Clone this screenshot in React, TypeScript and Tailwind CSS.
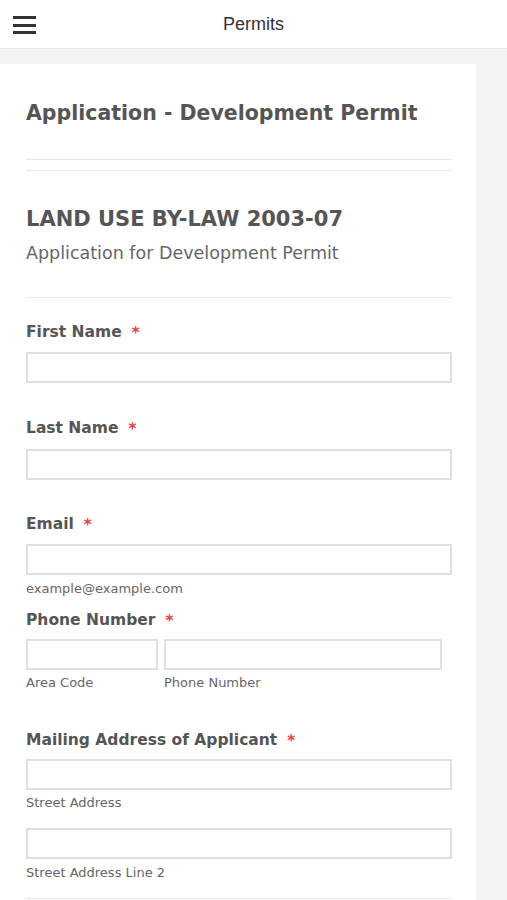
import React from 'react';

const font = { fontFamily: '"DejaVu Sans", "Liberation Sans", sans-serif' };

function Label({ text }: { text: string }) {
  return (
    <div className="flex items-center h-[22px] text-[15.5px] font-bold text-[#555]">
      <span>{text}</span>
      <span className="ml-[10px] text-[#f23a3c] text-[15px]">*</span>
    </div>
  );
}

function Input({ className = '' }: { className?: string }) {
  return <div className={`h-[31px] border-2 border-[#e0e0e0] bg-white ${className}`} />;
}

function Sub({ text }: { text: string }) {
  return <div className="h-[16px] leading-[16px] text-[13px] text-[#666]">{text}</div>;
}

export default function App() {
  return (
    <div className="min-h-[900px] bg-[#f4f4f4]" style={font}>
      {/* top bar */}
      <header className="relative h-[49px] bg-white border-b border-[#e6e6e6] flex items-center justify-center">
        <div className="absolute left-[13px] top-[16px] flex flex-col gap-[4.5px]">
          <span className="block w-[23px] h-[3px] bg-[#333]" />
          <span className="block w-[23px] h-[3px] bg-[#333]" />
          <span className="block w-[23px] h-[3px] bg-[#333]" />
        </div>
        <span className="text-[18px] text-[#333]" style={{ fontFamily: '"Liberation Sans", Arial, sans-serif' }}>
          Permits
        </span>
      </header>

      <main className="pt-[15px]">
        <div className="w-[476px] bg-white pl-[26px] pr-[24px] pt-[35px]">
          <h1 className="h-[28px] leading-[28px] text-[20.5px] font-bold text-[#555]">
            Application - Development Permit
          </h1>
          <div className="mt-[32px] h-px bg-[#e8e8e8]" />
          <div className="mt-[10px] h-px bg-[#e8e8e8]" />

          <h2 className="mt-[34px] h-[28px] leading-[28px] text-[21px] font-bold text-[#555]">
            LAND USE BY-LAW 2003-07
          </h2>
          <p className="h-[24px] leading-[24px] text-[17.5px] text-[#666] mt-[8px]">
            Application for Development Permit
          </p>
          <div className="mt-[32px] h-px bg-[#e8e8e8]" />

          <div className="pt-[24px]">
            <Label text="First Name" />
            <Input className="mt-[8px]" />
          </div>

          <div className="pt-[35px]">
            <Label text="Last Name" />
            <Input className="mt-[9px]" />
          </div>

          <div className="pt-[34px]">
            <Label text="Email" />
            <Input className="mt-[8px]" />
            <div className="mt-[6px]">
              <Sub text="example@example.com" />
            </div>
          </div>

          <div className="pt-[13px]">
            <Label text="Phone Number" />
            <div className="mt-[7px] flex gap-[6px]">
              <div className="w-[132px]">
                <Input />
                <div className="mt-[5px]">
                  <Sub text="Area Code" />
                </div>
              </div>
              <div className="w-[278px]">
                <Input />
                <div className="mt-[5px]">
                  <Sub text="Phone Number" />
                </div>
              </div>
            </div>
          </div>

          <div className="pt-[39px]">
            <Label text="Mailing Address of Applicant" />
            <Input className="mt-[7px]" />
            <div className="mt-[5px]">
              <Sub text="Street Address" />
            </div>
            <Input className="mt-[17px]" />
            <div className="mt-[6px]">
              <Sub text="Street Address Line 2" />
            </div>
          </div>
          <div className="mt-[17px] h-px bg-[#e8e8e8]" />
          <div className="h-[40px]" />
        </div>
      </main>
    </div>
  );
}
